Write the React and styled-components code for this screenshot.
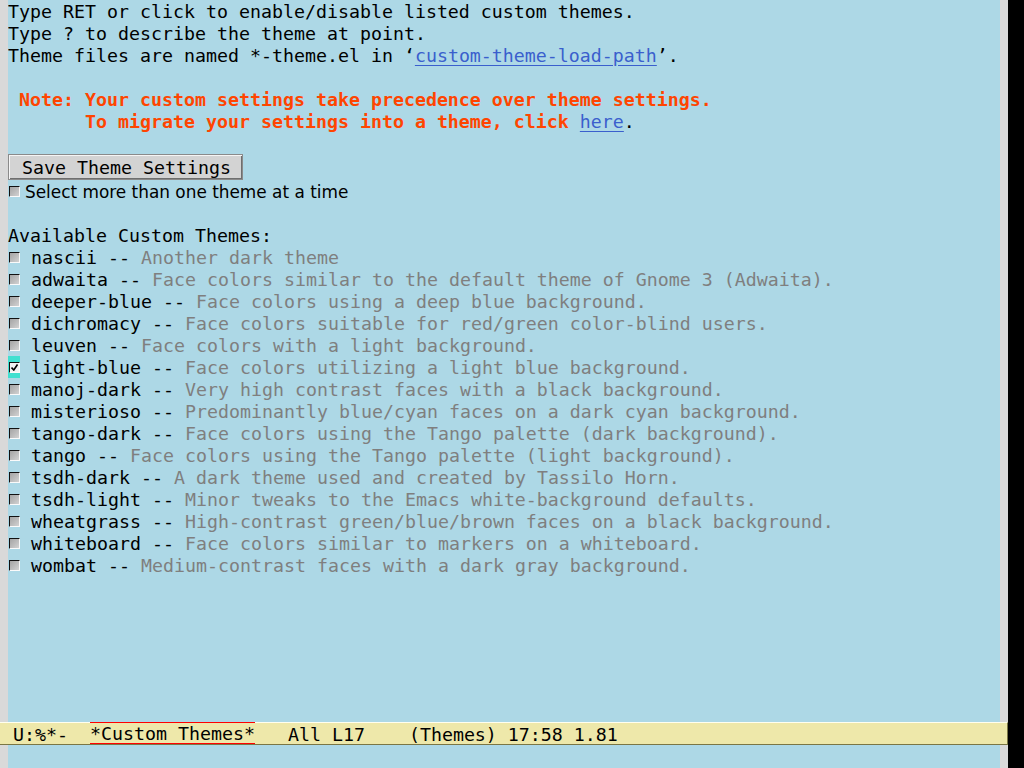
import React from "react";
import styled, { createGlobalStyle } from "styled-components";

const Global = createGlobalStyle`
  html, body { margin: 0; padding: 0; background: #000; }
  body { width: 1024px; height: 768px; overflow: hidden; }
`;

const mono = `"DejaVu Sans Mono", "Liberation Mono", monospace`;

const Frame = styled.div`
  display: flex;
  width: 1024px;
  height: 768px;
  background: #000;
`;

const Column = styled.div`
  width: 1008px;
  display: flex;
  flex-direction: column;
`;

const WindowRow = styled.div`
  display: flex;
  height: ${(p) => p.$h}px;
`;

const Fringe = styled.div`
  width: 8px;
  flex: none;
  background: #d9d9d9;
`;

const Buffer = styled.div`
  flex: 1;
  background: #add8e6;
  font-family: ${mono};
  font-size: 18.27px;
  line-height: 22px;
  color: #000;
  white-space: pre;
  overflow: hidden;
`;

const Line = styled.div`
  height: ${(p) => p.$h || 22}px;
  box-sizing: border-box;
  padding-top: ${(p) => (p.$h ? 0 : 2)}px;
  display: flex;
  align-items: center;
`;

const Warning = styled.span`
  color: #ff4500;
  font-weight: bold;
`;

const Link = styled.span`
  color: #3a5fcd;
  text-decoration: underline;
  text-underline-offset: 3px;
`;

const Button = styled.span`
  display: inline-block;
  height: 26px;
  box-sizing: border-box;
  line-height: 25px;
  padding: 0 13px;
  width: 235px;
  background: #d3d3d3;
  border: 1px solid #8a8a8a;
  box-shadow: inset 1px 1px 0 #f5f5f5, inset -1px -1px 0 #6e6e6e;
  color: #000;
`;

const Box = styled.span`
  display: inline-block;
  position: relative;
  width: 12px;
  height: 22px;
  margin-top: ${(p) => (p.$cursor ? -2 : 0)}px;
  flex: none;
  align-self: ${(p) => (p.$cursor ? "stretch" : "auto")};
  background: ${(p) => (p.$cursor ? "#40e0d0" : "transparent")};
  &::before {
    content: "";
    position: absolute;
    left: 1px;
    top: ${(p) => (p.$cursor ? 6 : 5)}px;
    width: 11px;
    height: 11px;
    box-sizing: border-box;
    border-top: 1px solid #111;
    border-left: 1px solid #111;
    border-right: 1px solid #fafafa;
    border-bottom: 1px solid #fafafa;
    background: ${(p) => (p.$on ? "#f2f2f2" : "linear-gradient(135deg, #a4a4a4, #d2d2d2)")};
  }
`;

const Check = styled.svg`
  position: absolute;
  left: 3px;
  top: 8px;
  z-index: 1;
`;

const Sans = styled.span`
  font-family: "DejaVu Sans", "Verdana", sans-serif;
  font-size: 16.9px;
  margin-left: 5px;
`;

const Name = styled.span`
  margin-left: 11px;
`;

const Doc = styled.span`
  color: #7f7f7f;
`;

const ModeLine = styled.div`
  height: 23px;
  box-sizing: border-box;
  background: #eee8aa;
  border-top: 1px solid #fffff0;
  border-bottom: 1px solid #7a7645;
  border-right: 1px solid #7a7645;
  font-family: ${mono};
  font-size: 18.27px;
  line-height: 20px;
  padding-top: 2px;
  white-space: pre;
  color: #000;
  padding-left: 2px;
`;

const BufName = styled.span`
  display: inline-block;
  box-sizing: border-box;
  height: 22px;
  margin-top: -3px;
  padding-top: 1px;
  border-top: 1px solid #ff0000;
  border-bottom: 1px solid #ff0000;
  line-height: 20px;
  vertical-align: top;
`;

const Black = styled.div`
  width: 16px;
  background: #000;
`;

const themes = [
  ["nascii", "Another dark theme"],
  ["adwaita", "Face colors similar to the default theme of Gnome 3 (Adwaita)."],
  ["deeper-blue", "Face colors using a deep blue background."],
  ["dichromacy", "Face colors suitable for red/green color-blind users."],
  ["leuven", "Face colors with a light background."],
  ["light-blue", "Face colors utilizing a light blue background.", true],
  ["manoj-dark", "Very high contrast faces with a black background."],
  ["misterioso", "Predominantly blue/cyan faces on a dark cyan background."],
  ["tango-dark", "Face colors using the Tango palette (dark background)."],
  ["tango", "Face colors using the Tango palette (light background)."],
  ["tsdh-dark", "A dark theme used and created by Tassilo Horn."],
  ["tsdh-light", "Minor tweaks to the Emacs white-background defaults."],
  ["wheatgrass", "High-contrast green/blue/brown faces on a black background."],
  ["whiteboard", "Face colors similar to markers on a whiteboard."],
  ["wombat", "Medium-contrast faces with a dark gray background."],
];

function CheckBox({ checked, cursor }) {
  return (
    <Box $cursor={cursor} $on={checked}>
      {checked && (
        <Check width="7" height="7" viewBox="0 0 7 7">
          <path d="M0.5 3.5 L2.8 6 L6.5 0.5" stroke="#000" strokeWidth="1.6" fill="none" />
        </Check>
      )}
    </Box>
  );
}

export default function App() {
  return (
    <>
      <Global />
      <Frame>
        <Column>
          <WindowRow $h={722}>
            <Fringe />
            <Buffer>
              <Line>Type RET or click to enable/disable listed custom themes.</Line>
              <Line>Type ? to describe the theme at point.</Line>
              <Line>
                Theme files are named *-theme.el in ‘<Link>custom-theme-load-path</Link>’.
              </Line>
              <Line />
              <Line>
                <Warning> Note: Your custom settings take precedence over theme settings.</Warning>
              </Line>
              <Line>
                <Warning>       To migrate your settings into a theme, click </Warning>
                <Link>here</Link>.
              </Line>
              <Line />
              <Line $h={26}>
                <Button>Save Theme Settings</Button>
              </Line>
              <Line>
                <CheckBox />
                <Sans>Select more than one theme at a time</Sans>
              </Line>
              <Line />
              <Line>Available Custom Themes:</Line>
              {themes.map(([n, d, on]) => (
                <Line key={n}>
                  <CheckBox checked={on} cursor={on} />
                  <Name>{n} -- </Name>
                  <Doc>{d}</Doc>
                </Line>
              ))}
            </Buffer>
            <Fringe />
          </WindowRow>
          <ModeLine>
            {" U:%*-  "}
            <BufName>*Custom Themes*</BufName>
            {"   All L17    (Themes) 17:58 1.81"}
          </ModeLine>
          <WindowRow $h={23}>
            <Fringe />
            <Buffer />
            <Fringe />
          </WindowRow>
        </Column>
        <Black />
      </Frame>
    </>
  );
}
